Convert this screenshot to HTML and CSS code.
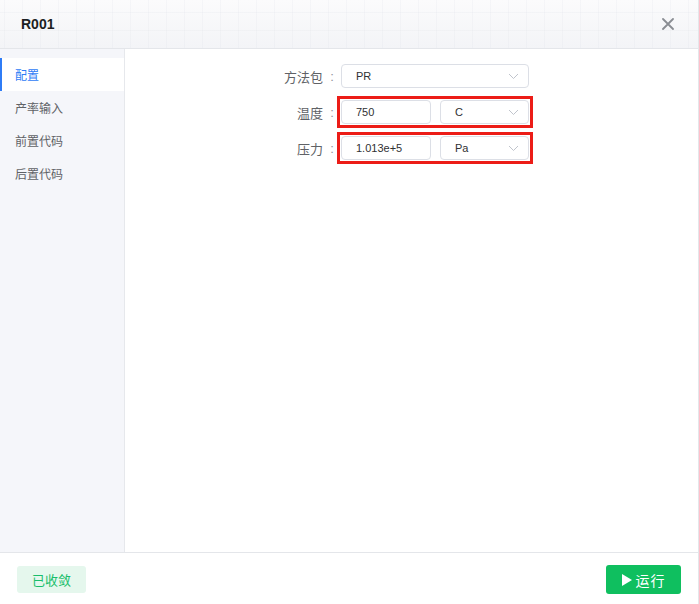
FILE: index.html
```html
<!DOCTYPE html>
<html lang="zh-CN">
<head>
    <meta charset="UTF-8">
    <meta name="viewport" content="width=device-width, initial-scale=1.0">
    <title>R001</title>
    <link rel="stylesheet" href="styles.css">
</head>
<body>
    <div class="dialog">
        <!-- Header -->
        <div class="dialog-header">
            <span class="dialog-title">R001</span>
            <span class="close-btn">
                <svg width="12" height="12" viewBox="0 0 12 12">
                    <path d="M1 1 L11 11 M11 1 L1 11" stroke="#8a8d93" stroke-width="1.8" stroke-linecap="round"/>
                </svg>
            </span>
        </div>

        <!-- Body -->
        <div class="dialog-body">
            <ul class="side-menu">
                <li class="menu-item active">配置</li>
                <li class="menu-item">产率输入</li>
                <li class="menu-item">前置代码</li>
                <li class="menu-item">后置代码</li>
            </ul>

            <div class="content">
                <div class="form-row">
                    <label class="form-label">方法包</label>
                    <span class="colon">:</span>
                    <div class="field">
                        <div class="select wide">
                            <span>PR</span>
                            <svg class="arrow" width="11" height="7" viewBox="0 0 11 7"><path d="M1 1 L5.5 5.5 L10 1" fill="none" stroke="#c0c4cc" stroke-width="1"/></svg>
                        </div>
                    </div>
                </div>
                <div class="form-row">
                    <label class="form-label">温度</label>
                    <span class="colon">:</span>
                    <div class="field marked">
                        <div class="input">750</div>
                        <div class="select unit">
                            <span>C</span>
                            <svg class="arrow" width="11" height="7" viewBox="0 0 11 7"><path d="M1 1 L5.5 5.5 L10 1" fill="none" stroke="#c0c4cc" stroke-width="1"/></svg>
                        </div>
                    </div>
                </div>
                <div class="form-row">
                    <label class="form-label">压力</label>
                    <span class="colon">:</span>
                    <div class="field marked">
                        <div class="input">1.013e+5</div>
                        <div class="select unit">
                            <span>Pa</span>
                            <svg class="arrow" width="11" height="7" viewBox="0 0 11 7"><path d="M1 1 L5.5 5.5 L10 1" fill="none" stroke="#c0c4cc" stroke-width="1"/></svg>
                        </div>
                    </div>
                </div>
            </div>
        </div>

        <!-- Footer -->
        <div class="dialog-footer">
            <span class="status-tag">已收敛</span>
            <button class="run-btn">
                <svg width="10" height="12" viewBox="0 0 10 12"><path d="M0 0 L10 6 L0 12 Z" fill="#fff"/></svg>
                运行
            </button>
        </div>
    </div>
</body>
</html>
```

FILE: styles.css
```css
body {
    margin: 0;
    font-family: "Liberation Sans", "Noto Sans CJK SC", sans-serif;
    background: #fff;
}
.dialog {
    width: 699px;
    height: 604px;
    display: flex;
    flex-direction: column;
    background: #fff;
    box-sizing: border-box;
    border-right: 1px solid #e4e6ea;
}
.dialog-header {
    height: 48px;
    flex-shrink: 0;
    display: flex;
    align-items: center;
    justify-content: space-between;
    padding: 0 24px 0 21px;
    border-bottom: 1px solid #e4e6ea;
    background-color: #f6f7f9;
    background-image:
        linear-gradient(to right, rgba(220, 223, 230, 0.2) 1px, transparent 1px),
        linear-gradient(to bottom, rgba(220, 223, 230, 0.2) 1px, transparent 1px),
        linear-gradient(to bottom, #fbfbfc, #f3f4f7);
    background-size: 18px 18px, 18px 18px, 100% 100%;
    background-position: 4px 0, 0 12px, 0 0;
}
.dialog-title {
    font-size: 14px;
    font-weight: bold;
    color: #1d1f23;
}
.close-btn {
    display: flex;
    align-items: center;
}
.dialog-body {
    flex: 1;
    display: flex;
    min-height: 0;
}
.side-menu {
    width: 124px;
    margin: 0;
    padding: 9px 0 0 0;
    list-style: none;
    background: #f5f6fa;
    border-right: 1px solid #e6e8ec;
    flex-shrink: 0;
}
.menu-item {
    height: 33px;
    line-height: 33px;
    padding-left: 15px;
    font-size: 12px;
    color: #606266;
    font-family: "Noto Sans CJK SC", sans-serif;
}
.menu-item.active {
    background: #fff;
    color: #2f7cf6;
    box-shadow: inset 2px 0 0 #2f7cf6;
}
.content {
    flex: 1;
    padding: 15px 0 0 118px;
}
.form-row {
    display: flex;
    align-items: center;
    height: 24px;
    margin-bottom: 12px;
}
.form-label {
    width: 80px;
    text-align: right;
    font-size: 13px;
    color: #606266;
    font-family: "Noto Sans CJK SC", sans-serif;
}
.colon {
    width: 18px;
    text-align: center;
    font-size: 13px;
    color: #909399;
}
.field {
    display: flex;
    gap: 9px;
}
.field.marked {
    outline: 3px solid #ec1c17;
    outline-offset: 1px;
}
.input, .select {
    height: 24px;
    box-sizing: border-box;
    border: 1px solid #dcdfe6;
    border-radius: 4px;
    font-size: 11px;
    color: #303133;
    display: flex;
    align-items: center;
    padding-left: 14px;
    background: #fff;
}
.input {
    width: 90px;
}
.select {
    justify-content: space-between;
    padding-right: 9px;
}
.select.wide {
    width: 188px;
}
.select.unit {
    width: 89px;
}
.dialog-footer {
    height: 51px;
    flex-shrink: 0;
    border-top: 1px solid #e4e6ea;
    display: flex;
    align-items: center;
    justify-content: space-between;
    padding: 0 17px;
}
.status-tag {
    width: 69px;
    height: 27px;
    line-height: 27px;
    text-align: center;
    background: #e5f7ed;
    color: #19be6b;
    border-radius: 3px;
    font-size: 13px;
    font-family: "Noto Sans CJK SC", sans-serif;
    margin-top: 2px;
}
.run-btn {
    width: 75px;
    height: 29px;
    border: none;
    border-radius: 3px;
    background: #0fbf5f;
    color: #fff;
    font-size: 14px;
    letter-spacing: 1px;
    font-family: "Noto Sans CJK SC", sans-serif;
    display: flex;
    align-items: center;
    justify-content: center;
    gap: 4px;
    padding: 0;
    margin-top: 2px;
}
```
